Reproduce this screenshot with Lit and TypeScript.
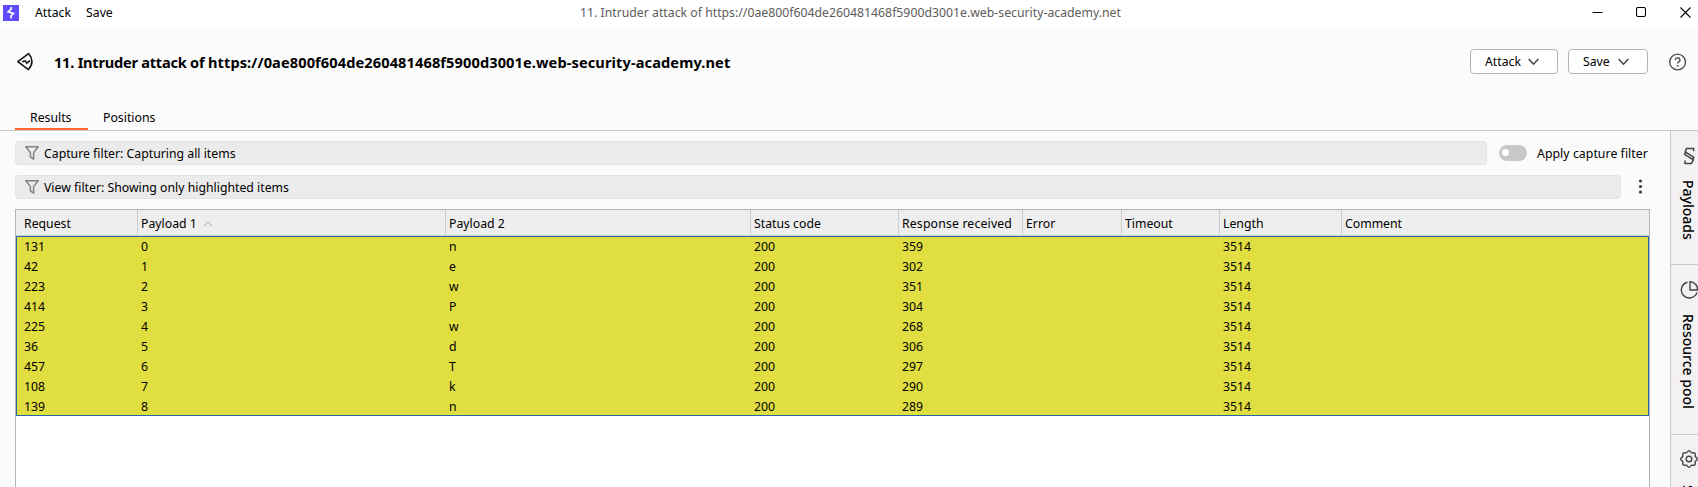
import { LitElement, html, css, svg } from "lit";
import { customElement } from "lit/decorators.js";

const PREFIX = "11. Intruder attack of ";
const HOST = "https://0ae800f604de260481468f5900d3001e.web-security-academy.net";

const COLUMNS = [
  "Request", "Payload 1", "Payload 2", "Status code", "Response received",
  "Error", "Timeout", "Length", "Comment",
];

const ROWS = [
  ["131", "0", "n", "200", "359", "", "", "3514", ""],
  ["42", "1", "e", "200", "302", "", "", "3514", ""],
  ["223", "2", "w", "200", "351", "", "", "3514", ""],
  ["414", "3", "P", "200", "304", "", "", "3514", ""],
  ["225", "4", "w", "200", "268", "", "", "3514", ""],
  ["36", "5", "d", "200", "306", "", "", "3514", ""],
  ["457", "6", "T", "200", "297", "", "", "3514", ""],
  ["108", "7", "k", "200", "290", "", "", "3514", ""],
  ["139", "8", "n", "200", "289", "", "", "3514", ""],
];

const chevron = html`<svg width="11" height="8" viewBox="0 0 11 8"><path d="M0.7 1 L5.5 6.2 L10.3 1" fill="none" stroke="#444" stroke-width="1.5"/></svg>`;
const funnel = html`<svg width="16" height="16" viewBox="0 0 16 16"><path d="M1.8 1.8 H14.2 L9.6 7.6 V14.2 L6.4 11.8 V7.6 Z" fill="none" stroke="#828282" stroke-width="1.5" stroke-linejoin="round"/></svg>`;

// Scalloped outline of the settings cog.
const cogPath = (() => {
  const pts: string[] = [];
  for (let i = 0; i <= 96; i++) {
    const a = (i / 96) * Math.PI * 2;
    const r = 7.5 + 0.75 * Math.cos(8 * a);
    pts.push(`${(9 + r * Math.cos(a)).toFixed(2)} ${(9 + r * Math.sin(a)).toFixed(2)}`);
  }
  return `M${pts.join("L")}Z`;
})();

@customElement("app-root")
export class AppRoot extends LitElement {
  static styles = css`
    :host {
      display: flex;
      flex-direction: column;
      height: 487px;
      overflow: hidden;
      background: #fbfbfb;
      color: #000;
      font: 12.28px/18px "Noto Sans", "Open Sans", sans-serif;
      white-space: nowrap;
    }
    * { box-sizing: border-box; }
    svg { display: block; flex: none; }
    .titlebar {
      height: 28px;
      flex: none;
      display: grid;
      grid-template-columns: 580px 1fr auto;
      background: #fff;
      padding-bottom: 3px;
      align-items: center;
    }
    .menus { display: flex; align-items: center; padding-left: 3px; }
    .menus svg { margin-right: 16px; }
    .menus span + span { margin-left: 15px; }
    .caption { color: #5c5c5c; }
    .winbtns { display: flex; gap: 33px; padding-right: 7px; align-items: center; }
    .head { height: 67px; flex: none; display: flex; align-items: center; padding: 0 11px 0 15px; }
    .head h1 { font-size: 14.6px; line-height: 20px; font-weight: 700; margin: 0 auto 0 19px; letter-spacing: 0.1px; }
    .prefix { letter-spacing: -0.24px; }
    .btn {
      height: 25px;
      display: flex;
      align-items: center;
      border: 1px solid #b6b1b3;
      border-radius: 4px;
      background: #fff;
      padding-left: 14px;
    }
    .btn svg { margin-left: auto; margin-right: 18px; }
    .attack { width: 88px; margin-right: 10px; }
    .save { width: 80px; margin-right: 21px; }
    .tabs { height: 36px; flex: none; display: flex; padding-left: 15px; border-bottom: 1px solid #c3cccb; }
    .tab { padding: 14px 15px 0; height: 35px; border-bottom: 2px solid transparent; }
    .tab.on { border-color: #ff6633; width: 73px; }
    .body { flex: 1; min-height: 0; display: flex; }
    .main { width: 1670px; padding: 10px 0 0 15px; display: flex; flex-direction: column; }
    .filter { display: flex; align-items: center; height: 24px; margin-bottom: 10px; }
    .filter span { padding-top: 2px; }
    .filter .apply { letter-spacing: 0.06px; }
    .box {
      height: 24px;
      display: flex;
      align-items: center;
      background: #ebebeb;
      border: 1px solid #e3e3e3;
      border-radius: 4px;
      padding-left: 8px;
    }
    .box svg { margin-right: 4px; }
    .capture { width: 1472px; }
    .view { width: 1606px; }
    .toggle { width: 28px; height: 16px; border-radius: 8px; background: #c8c8c8; margin: 0 10px 0 12px; padding: 4px 3px; }
    .knob { width: 7px; height: 7px; border-radius: 50%; background: #fff; }
    .kebab { margin-left: 17px; }
    .table { width: 1635px; flex: 1; min-height: 0; border: 1px solid #b3b3b3; border-bottom: 0; background: #fff; }
    .row { display: grid; grid-template-columns: 122px 308px 305px 148px 124px 99px 98px 122px 1fr; }
    .row > * { padding-left: 3px; }
    .row > :first-child { padding-left: 8px; }
    .thead { height: 26px; background: #eee; border-bottom: 1px solid #d0d0d0; }
    .th { display: flex; align-items: center; gap: 6px; border-right: 1px solid #ccc; padding-top: 2px; }
    .th:nth-child(5) { letter-spacing: 0.16px; }
    .th:last-child { border-right: 0; }
    .rows { height: 180px; background: #e0de41; border: 1px solid #2466a8; }
    .rows .row { height: 20px; line-height: 20px; margin: 0 -1px; }
    .side { width: 28px; flex: none; border-left: 1px solid #c3cccb; background: #f4f1f2; }
    .item { display: flex; flex-direction: column; align-items: flex-start; border-bottom: 1px solid #c3cccb; padding-left: 9px; }
    .item span { writing-mode: vertical-rl; font-size: 14px; line-height: 18px; margin-left: -1px; font-weight: 500; }
    .payloads { height: 134px; padding-top: 16px; }
    .pool { height: 170px; padding-top: 16px; }
    .settings { height: 170px; padding-top: 15px; }
    .item svg { margin-bottom: 15px; }
    .settings svg { margin-bottom: 17px; }
  `;

  render() {
    return html`
      <div class="titlebar">
        <div class="menus">
          <svg width="16" height="16" viewBox="0 0 16 16"><rect width="16" height="16" fill="#5f4bfb"/><path d="M8.2 2 V4 L5.2 6.8 L10.4 8.4 L8 11 V13.5" fill="none" stroke="#fff" stroke-width="1.7"/></svg>
          <span>Attack</span><span>Save</span>
        </div>
        <div class="caption">${PREFIX}${HOST}</div>
        <div class="winbtns">
          <svg width="11" height="11"><path d="M0.5 5.5H10.5" stroke="#000"/></svg>
          <svg width="11" height="11"><rect x="0.5" y="0.5" width="9" height="9" rx="1.5" fill="none" stroke="#000" stroke-width="1.1"/></svg>
          <svg width="11" height="11"><path d="M0.5 0.5L10.5 10.5M10.5 0.5L0.5 10.5" stroke="#000" stroke-width="1.1"/></svg>
        </div>
      </div>
      <div class="head">
        <svg width="20" height="20" viewBox="0 0 20 20"><path d="M2.8 9.6 L13.6 1.6 Q20.4 9.6 13.4 17.6 Z" fill="none" stroke="#111" stroke-width="1.5" stroke-linejoin="round"/><path d="M7.2 9.8 L10.2 8.8 L11.8 11.2 L15 8.6" fill="none" stroke="#111" stroke-width="1.5"/></svg>
        <h1><span class="prefix">${PREFIX}</span>${HOST}</h1>
        <div class="btn attack">Attack${chevron}</div>
        <div class="btn save">Save${chevron}</div>
        <svg width="18" height="18" viewBox="0 0 18 18"><circle cx="8.6" cy="9" r="7.9" fill="none" stroke="#505050" stroke-width="1.4"/><path d="M6.3 7.1 A2.3 2.2 0 1 1 9.4 9.1 Q8.6 9.5 8.6 10.4" fill="none" stroke="#505050" stroke-width="1.4"/><circle cx="8.6" cy="12.8" r="0.9" fill="#505050"/></svg>
      </div>
      <div class="tabs"><div class="tab on">Results</div><div class="tab">Positions</div></div>
      <div class="body">
        <div class="main">
          <div class="filter">
            <div class="box capture">${funnel}<span>Capture filter: Capturing all items</span></div>
            <div class="toggle"><div class="knob"></div></div>
            <span class="apply">Apply capture filter</span>
          </div>
          <div class="filter">
            <div class="box view">${funnel}<span>View filter: Showing only highlighted items</span></div>
            <svg class="kebab" width="5" height="16" viewBox="0 0 5 16"><g fill="#3c3c3c"><circle cx="2.5" cy="2" r="1.6"/><circle cx="2.5" cy="7.5" r="1.6"/><circle cx="2.5" cy="13" r="1.6"/></g></svg>
          </div>
          <div class="table">
            <div class="row thead">
              ${COLUMNS.map((c, i) => html`<div class="th"><span>${c}</span>${i === 1
                ? html`<svg width="10" height="6" viewBox="0 0 10 6"><path d="M0.7 5.3L5 1L9.3 5.3" fill="none" stroke="#aaa"/></svg>` : ""}</div>`)}
            </div>
            <div class="rows">
              ${ROWS.map((r) => html`<div class="row">${r.map((v) => html`<div>${v}</div>`)}</div>`)}
            </div>
          </div>
        </div>
        <div class="side">
          <div class="item payloads">
            <svg width="18" height="18" viewBox="0 0 18 18"><path d="M13.6 4.2 V1.4 H6.6 L5.2 4.8 L13.9 10.4 L12.4 13.4 M5 13.4 V16.4 H11.4 L13.4 12.8 L4.6 7.4 L6 4.4" fill="none" stroke="#444" stroke-width="1.5" stroke-linejoin="round"/></svg>
            <span>Payloads</span>
          </div>
          <div class="item pool">
            <svg width="18" height="18" viewBox="0 0 18 18"><path d="M7.5 1.2 A8 8 0 1 0 17 11.4" fill="none" stroke="#444" stroke-width="1.4"/><path d="M10 0.8 V9 H17.6 A7.8 7.8 0 0 0 10 0.8Z" fill="none" stroke="#444" stroke-width="1.4"/></svg>
            <span>Resource pool</span>
          </div>
          <div class="item settings">
            <svg width="18" height="18" viewBox="0 0 18 18">${svg`<path d=${cogPath} fill="none" stroke="#444" stroke-width="1.4"/>`}<circle cx="9" cy="9" r="2.8" fill="none" stroke="#444" stroke-width="1.4"/></svg>
            <span>Settings</span>
          </div>
        </div>
      </div>
    `;
  }
}
